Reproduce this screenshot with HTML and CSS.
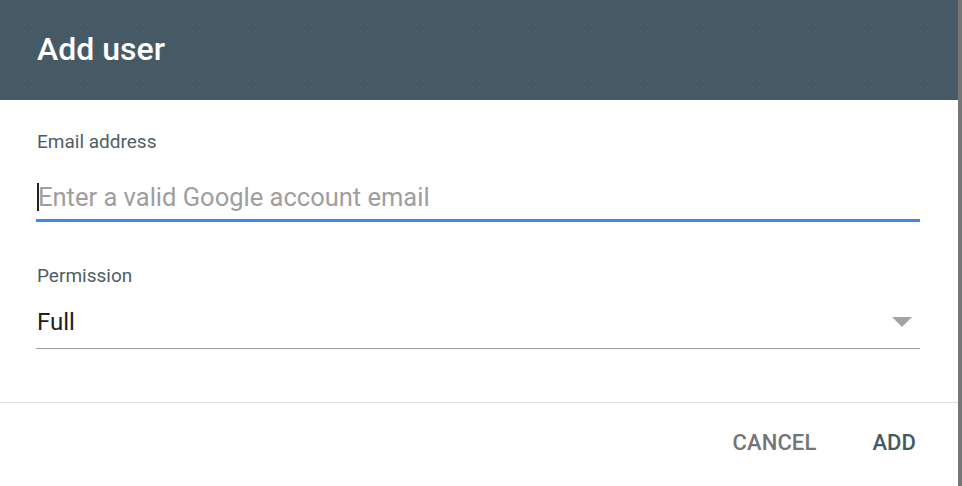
FILE: index.html
```html
<!DOCTYPE html>
<html>
<head>
<meta charset="utf-8">
<link rel="stylesheet" href="styles.css">
</head>
<body>
<div class="frame">
  <div class="dialog">
    <div class="header"><h1 class="title">Add user</h1></div>
    <div class="content">
      <div class="field">
        <label class="label">Email address</label>
        <div class="input focused"><span class="caret"></span><span class="placeholder">Enter a valid Google account email</span></div>
      </div>
      <div class="field">
        <label class="label">Permission</label>
        <div class="input select"><span class="value">Full</span><span class="arrow"></span></div>
      </div>
    </div>
    <div class="actions">
      <button class="btn cancel">CANCEL</button>
      <button class="btn add">ADD</button>
    </div>
  </div>
  <div class="edge"></div>
</div>
</body>
</html>
```

FILE: styles.css
```css
html, body {
  margin: 0;
  padding: 0;
  height: 100%;
}
body {
  font-family: Roboto, "Noto Sans", sans-serif;
  background: #fff;
}
.frame {
  display: flex;
  height: 486px;
}
.dialog {
  width: 958px;
  display: flex;
  flex-direction: column;
  background: #fff;
}
.edge {
  flex: 1;
  background: #767676;
}
.header {
  height: 100px;
  background-color: #465a65;
  background-image: radial-gradient(rgba(255, 255, 255, 0.05) 0.8px, transparent 1px);
  background-size: 7px 7px;
  padding: 0 37px;
  display: flex;
  align-items: center;
}
.title {
  margin: 0;
  color: #fff;
  font-size: 32px;
  font-weight: 500;
  line-height: 1;
  padding-bottom: 2px;
}
.content {
  padding: 0 38px 0 36px;
  border-bottom: 1px solid #e0e0e0;
  height: 303px;
  box-sizing: border-box;
}
.field {
  display: flex;
  flex-direction: column;
}
.label {
  font-size: 19px;
  color: #4d5e67;
  line-height: 20px;
  margin-top: 32px;
  padding-left: 1px;
}
.field + .field .label {
  margin-top: 44px;
}
.input {
  display: flex;
  align-items: center;
  margin-top: 23px;
  box-sizing: border-box;
}
.focused {
  border-bottom: 3px solid #4285f4;
  height: 47px;
}
.caret {
  width: 2px;
  height: 28px;
  background: #222;
  margin-left: 1px;
  margin-right: -2px;
}
.placeholder {
  font-size: 25.5px;
  color: #9e9e9e;
  padding-left: 1px;
}
.select {
  border-bottom: 1px solid #9e9e9e;
  height: 53px;
  margin-top: 10px;
  justify-content: space-between;
}
.value {
  font-size: 24px;
  color: #212121;
  padding-left: 1px;
}
.arrow {
  width: 0;
  height: 0;
  border-left: 10px solid transparent;
  border-right: 10px solid transparent;
  border-top: 10px solid #a3a3a3;
  margin-right: 8px;
}
.actions {
  flex: 1;
  display: flex;
  justify-content: flex-end;
  align-items: center;
  padding-right: 42px;
  padding-bottom: 3px;
  gap: 56px;
}
.btn {
  background: none;
  border: 0;
  padding: 0;
  font-family: Roboto, "Noto Sans", sans-serif;
  font-size: 22px;
  font-weight: 500;
  letter-spacing: 0.1px;
  line-height: 1;
  cursor: pointer;
}
.cancel { color: #757575; }
.add { color: #465a65; }
```
